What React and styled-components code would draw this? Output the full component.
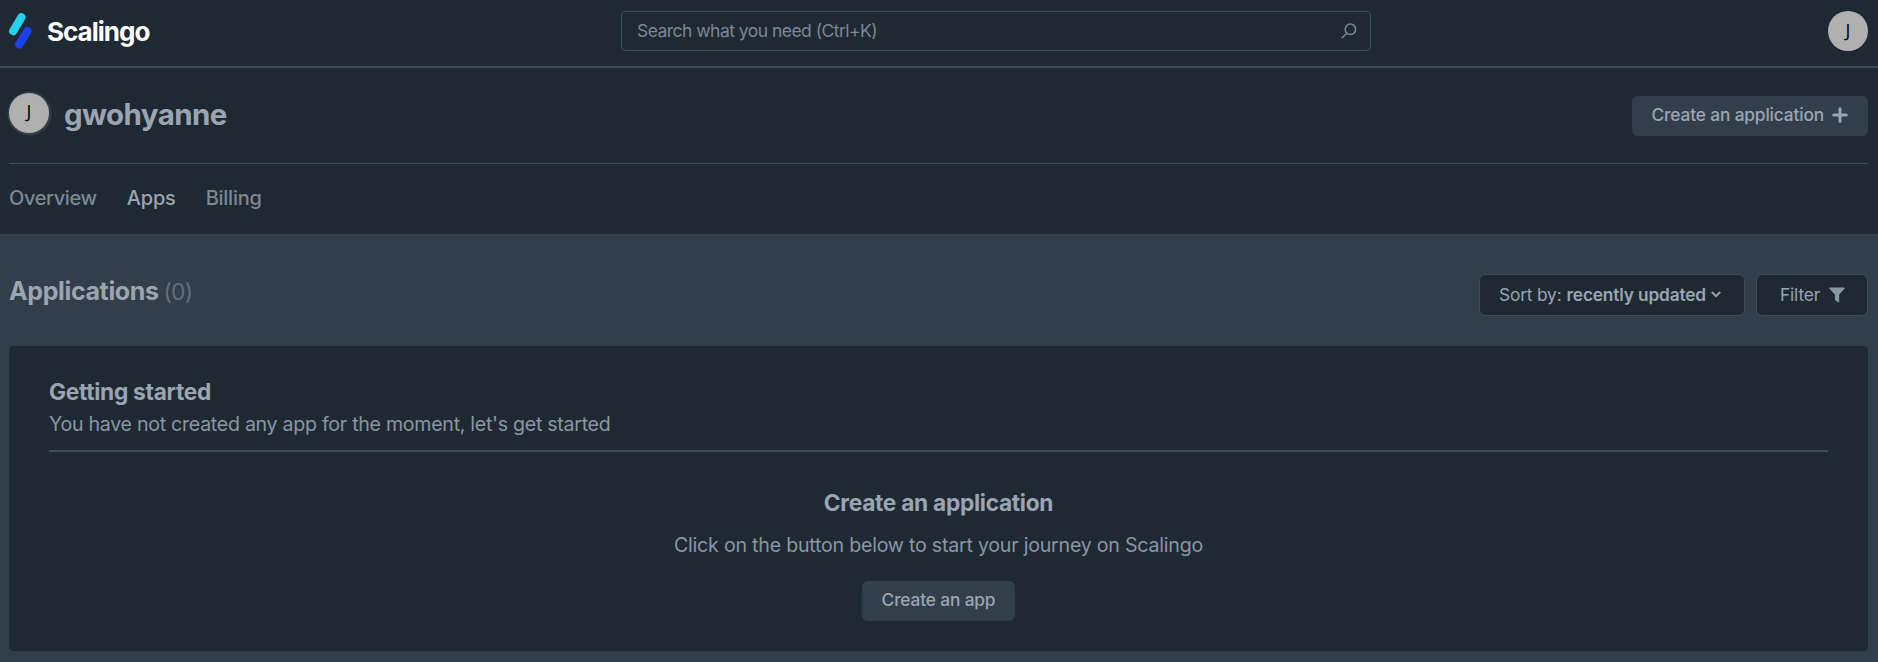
import React from "react";
import styled, { createGlobalStyle } from "styled-components";

const Global = createGlobalStyle`
  * { box-sizing: border-box; }
  html, body, #root { height: 100%; }
  body {
    margin: 0;
    background: #323f4b;
    color: #9aa5b1;
    font-family: Inter, "Liberation Sans", sans-serif;
    overflow: hidden;
  }
  h1, h2, h3, p { margin: 0; }
`;

const TopBar = styled.header`
  display: grid;
  grid-template-columns: 613px 750px 1fr;
  align-items: center;
  height: 68px;
  padding: 0 10px 4px 8px;
  border-bottom: 2px solid #3e4c59;
  background: #1f2933;
`;

const Brand = styled.a`
  display: flex;
  align-items: center;
  gap: 15px;
  color: #fff;
`;

const BrandName = styled.span`
  padding-top: 2px;
  font-size: 26px;
  font-weight: 700;
  line-height: 36px;
  letter-spacing: -1px;
`;

const SearchBox = styled.label`
  display: flex;
  align-items: center;
  justify-content: space-between;
  height: 40px;
  padding: 0 13px 0 15px;
  border: 1px solid #3e4c59;
  border-radius: 4px;
  color: #7b8794;
  font-size: 17.5px;
  line-height: 20px;
  letter-spacing: -0.53px;
`;

const Avatar = styled.div`
  display: flex;
  flex: none;
  align-items: center;
  justify-content: center;
  justify-self: end;
  width: 40px;
  height: 40px;
  padding-bottom: 3px;
  border-radius: 50%;
  background: #b0b0b0;
  color: #000;
  font-family: "Open Sans", "Noto Sans", sans-serif;
  font-size: 18px;
  line-height: 20px;
  box-shadow: ${(p) => (p.$ring ? "0.5px 0.5px 0 2px #323f4b" : "none")};
`;

const AccountHeader = styled.section`
  height: 166px;
  padding: 0 10px 0 9px;
  background: #1f2933;
`;

const AccountRow = styled.div`
  display: flex;
  align-items: center;
  height: 96px;
  padding-bottom: 6px;
  border-bottom: 1px solid #3e4c59;
`;

const AccountName = styled.h1`
  flex: 1;
  padding: 3px 0 0 15px;
  font-size: 29.5px;
  font-weight: 700;
  line-height: 36px;
  letter-spacing: -0.6px;
`;

const Button = styled.button`
  display: flex;
  align-items: center;
  gap: 8px;
  height: 40px;
  margin: ${(p) => p.$margin || 0};
  padding: 0 20px 2px;
  border: 0;
  border-radius: 6px;
  background: #323f4b;
  color: #9aa5b1;
  font: 500 17.3px/20px Inter, sans-serif;
  letter-spacing: -0.14px;
`;

const Tabs = styled.nav`
  display: flex;
  gap: 30px;
  padding-top: 22px;
`;

const Tab = styled.a`
  color: ${(p) => (p.$active ? "#9aa5b1" : "#7b8794")};
  font-size: 20px;
  font-weight: 500;
  line-height: 24px;
  letter-spacing: ${(p) => p.$spacing || 0};
`;

const Main = styled.main`
  padding: 40px 10px 0 9px;
`;

const ListHeader = styled.div`
  display: flex;
  gap: 11px;
  height: 72px;
`;

const ListTitle = styled.h2`
  flex: 1;
  padding-top: 1px;
  font-size: 25px;
  font-weight: 700;
  line-height: 32px;
  letter-spacing: -0.37px;
`;

const Count = styled.span`
  margin-left: 5px;
  color: #616e7c;
  font-size: 23px;
  font-weight: 400;
  letter-spacing: -0.9px;
`;

const Control = styled.button`
  display: flex;
  align-items: center;
  gap: ${(p) => p.$gap};
  width: ${(p) => p.$width};
  height: 42px;
  padding: 0 0 1px ${(p) => p.$inset};
  border: 1px solid #3e4c59;
  border-radius: 6px;
  background: #1f2933;
  color: #9aa5b1;
  font: 400 17.3px/20px Inter, sans-serif;
  letter-spacing: -0.15px;
`;

const Strong = styled.span`
  font-weight: 600;
`;

const Card = styled.section`
  height: 305px;
  padding: 32px 40px 0;
  border-radius: 4px;
  background: #1f2933;
`;

const CardHeader = styled.div`
  height: 74px;
  border-bottom: 2px solid #3e4c59;
`;

const CardTitle = styled.h3`
  font-size: 22.7px;
  font-weight: 700;
  line-height: 28px;
  letter-spacing: -0.28px;
`;

const CardText = styled.p`
  padding-top: 6px;
  color: #8a96a3;
  font-size: 19.6px;
  line-height: 24px;
  letter-spacing: ${(p) => p.$spacing};
`;

const EmptyState = styled.div`
  display: flex;
  flex-direction: column;
  align-items: center;
  padding-top: 37px;
`;

const EmptyTitle = styled(CardTitle)`
  margin-bottom: 10px;
`;

const Logo = () => (
  <svg width="24" height="36" viewBox="0 0 24 36" fill="none" strokeLinecap="round" strokeWidth="8.2">
    <path d="M5.2 18.1 13.4 4.3" stroke="#22d3ee" />
    <path d="M11.2 31.4 19.4 18" stroke="#1d40ed" />
  </svg>
);

const SearchIcon = () => (
  <svg width="16" height="16" viewBox="0 0 16 16" fill="none" stroke="currentColor" strokeWidth="1.5">
    <circle cx="9.4" cy="6.3" r="5.2" />
    <path d="M5.8 10.2 0.7 15.3" />
  </svg>
);

const PlusIcon = () => (
  <svg width="16" height="16" viewBox="0 0 16 16" fill="none" stroke="currentColor" strokeWidth="3" strokeLinecap="round">
    <path d="M8 1.7V14.3M1.7 8H14.3" />
  </svg>
);

const ChevronIcon = () => (
  <svg width="10" height="7" viewBox="0 0 10 7" fill="none" stroke="currentColor" strokeWidth="1.9">
    <path d="M0.8 1 5 5.2 9.2 1" />
  </svg>
);

const FunnelIcon = () => (
  <svg width="16" height="16" viewBox="0 0 16 16" fill="#8a96a3">
    <path d="M1 .5h14c.7 0 1 .8.5 1.3L10.2 7.5v7.1c0 .7-.7 1-1.2.6L6.3 13.2a1 1 0 0 1-.4-.8V7.5L.5 1.8C0 1.3.3.5 1 .5Z" />
  </svg>
);

export default function App() {
  return (
    <>
      <Global />
      <TopBar>
        <Brand><Logo /><BrandName>Scalingo</BrandName></Brand>
        <SearchBox>Search what you need (Ctrl+K)<SearchIcon /></SearchBox>
        <Avatar>J</Avatar>
      </TopBar>
      <AccountHeader>
        <AccountRow>
          <Avatar $ring>J</Avatar>
          <AccountName>gwohyanne</AccountName>
          <Button $margin="6px 0 0">Create an application <PlusIcon /></Button>
        </AccountRow>
        <Tabs>
          <Tab $spacing="-0.38px">Overview</Tab>
          <Tab $active $spacing="-0.2px">Apps</Tab>
          <Tab $spacing="-0.25px">Billing</Tab>
        </Tabs>
      </AccountHeader>
      <Main>
        <ListHeader>
          <ListTitle>Applications<Count>(0)</Count></ListTitle>
          <Control $width="266px" $inset="19px" $gap="5px">
            <span>Sort by:</span><Strong>recently updated</Strong><ChevronIcon />
          </Control>
          <Control $width="112px" $inset="23px" $gap="9px">Filter<FunnelIcon /></Control>
        </ListHeader>
        <Card>
          <CardHeader>
            <CardTitle>Getting started</CardTitle>
            <CardText $spacing="-0.28px">You have not created any app for the moment, let's get started</CardText>
          </CardHeader>
          <EmptyState>
            <EmptyTitle>Create an application</EmptyTitle>
            <CardText $spacing="-0.22px">Click on the button below to start your journey on Scalingo</CardText>
            <Button $margin="24px 0 0">Create an app</Button>
          </EmptyState>
        </Card>
      </Main>
    </>
  );
}
